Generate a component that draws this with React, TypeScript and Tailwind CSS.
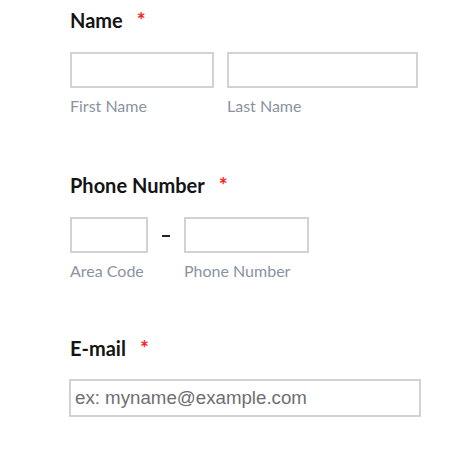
import React from 'react'

const labelFont = { fontFamily: 'Lato, "Open Sans", sans-serif' }

function Label({ children }: { children: React.ReactNode }) {
  return (
    <div className="flex items-start text-[20px] leading-[24px] font-bold text-[#141414]" style={labelFont}>
      <span>{children}</span>
      <span className="ml-[14px] text-[21px] leading-[24px] font-bold text-[#ff2020]">*</span>
    </div>
  )
}

function Sub({ children }: { children: React.ReactNode }) {
  return (
    <div className="mt-[8px] text-[16px] leading-[19px] text-[#8a93a2]" style={labelFont}>
      {children}
    </div>
  )
}

function Box({ className = '' }: { className?: string }) {
  return <input type="text" className={`border-2 border-[#d2d2d2] bg-white outline-none ${className}`} />
}

export default function App() {
  return (
    <div className="w-[476px] h-[458px] bg-white pl-[70px] pt-[8px]">
      <Label>Name</Label>
      <div className="mt-[20px] flex gap-[13px]">
        <div>
          <Box className="w-[144px] h-[36px]" />
          <Sub>First Name</Sub>
        </div>
        <div>
          <Box className="w-[191px] h-[36px]" />
          <Sub>Last Name</Sub>
        </div>
      </div>

      <div className="mt-[58px]">
        <Label>Phone Number</Label>
      </div>
      <div className="mt-[20px] flex">
        <div>
          <Box className="w-[78px] h-[36px]" />
          <Sub>Area Code</Sub>
        </div>
        <div className="w-[36px] h-[36px] flex items-center justify-center">
          <span className="block w-[8px] h-[2px] mt-[2px] bg-[#222]" />
        </div>
        <div>
          <Box className="w-[125px] h-[36px]" />
          <Sub>Phone Number</Sub>
        </div>
      </div>

      <div className="mt-[56px]">
        <Label>E-mail</Label>
      </div>
      <input
        type="text"
        placeholder="ex: myname@example.com"
        className="mt-[19px] -ml-px block w-[352px] h-[38px] border-2 border-[#d2d2d2] bg-white px-[4px] text-[18.7px] text-[#555] placeholder:text-[#6e6e72] outline-none"
        style={{ fontFamily: '"Liberation Sans", Arial, sans-serif' }}
      />
    </div>
  )
}
